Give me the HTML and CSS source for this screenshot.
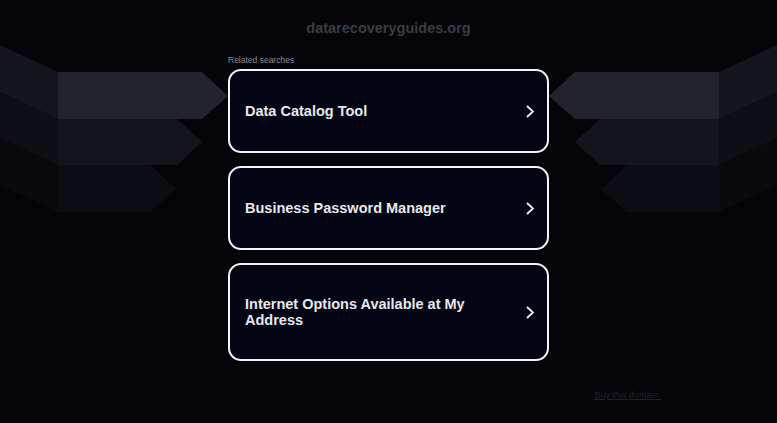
FILE: index.html
```html
<!DOCTYPE html>
<html lang="en">
<head>
  <meta charset="UTF-8">
  <title>datarecoveryguides.org</title>
  <link rel="stylesheet" href="styles.css">
</head>
<body>

  <!-- background arrows -->
  <svg class="decor" viewBox="0 0 777 423" width="777" height="423" aria-hidden="true">
    <g class="left">
      <polygon points="0,45 58,72 58,119 0,92" fill="#15161d"/>
      <polygon points="0,92 58,119 58,165 0,138" fill="#0e0f15"/>
      <polygon points="0,138 58,165 58,212 0,185" fill="#09090e"/>
      <polygon points="58,72 202,72 228,96 202,119 58,119" fill="#22232d"/>
      <polygon points="58,119 177,119 202,142 177,165 58,165" fill="#14151c"/>
      <polygon points="58,165 150,165 176,189 150,212 58,212" fill="#0c0d12"/>
    </g>
    <g class="right" transform="translate(777,0) scale(-1,1)">
      <polygon points="0,45 58,72 58,119 0,92" fill="#15161d"/>
      <polygon points="0,92 58,119 58,165 0,138" fill="#0e0f15"/>
      <polygon points="0,138 58,165 58,212 0,185" fill="#09090e"/>
      <polygon points="58,72 202,72 228,96 202,119 58,119" fill="#22232d"/>
      <polygon points="58,119 177,119 202,142 177,165 58,165" fill="#14151c"/>
      <polygon points="58,165 150,165 176,189 150,212 58,212" fill="#0c0d12"/>
    </g>
  </svg>

  <div id="page">
    <h1 class="domain">datarecoveryguides.org</h1>

    <div class="related">
      <div class="related-title">Related searches</div>

      <a class="search-card" href="#">
        <span class="search-text">Data Catalog Tool</span>
        <svg class="chevron" viewBox="0 0 8 13" width="8" height="13"><polyline points="1,1 7,6.5 1,12"/></svg>
      </a>

      <a class="search-card" href="#">
        <span class="search-text">Business Password Manager</span>
        <svg class="chevron" viewBox="0 0 8 13" width="8" height="13"><polyline points="1,1 7,6.5 1,12"/></svg>
      </a>

      <a class="search-card" href="#">
        <span class="search-text">Internet Options Available at My Address</span>
        <svg class="chevron" viewBox="0 0 8 13" width="8" height="13"><polyline points="1,1 7,6.5 1,12"/></svg>
      </a>
    </div>

    <div class="footer">
      <a href="#" class="buy-link">Buy this domain.</a>
    </div>
  </div>

</body>
</html>
```

FILE: styles.css
```css
html, body {
  margin: 0;
  height: 100%;
  background: #050509;
  font-family: "Liberation Sans", Arial, sans-serif;
  overflow: hidden;
}

.decor {
  position: absolute;
  top: 0;
  left: 0;
  z-index: 0;
}

#page {
  position: relative;
  z-index: 1;
  display: flex;
  flex-direction: column;
  align-items: center;
}

.domain {
  margin: 0;
  padding-top: 19px;
  font-size: 14.5px;
  line-height: 18px;
  font-weight: bold;
  color: #3b3c45;
}

.related {
  width: 321px;
  margin-top: 18px;
  display: flex;
  flex-direction: column;
  gap: 13px;
}

.related-title {
  font-size: 8.5px;
  line-height: 10px;
  color: #8a8a94;
  margin-bottom: -9px;
}

.search-card {
  box-sizing: border-box;
  min-height: 84px;
  display: flex;
  align-items: center;
  padding: 31px 13px 31px 15px;
  border: 2px solid #f4f4f6;
  border-radius: 13px;
  background: #030514;
  text-decoration: none;
}

.search-text {
  flex: 1;
  max-width: 255px;
  font-size: 14.5px;
  line-height: 16px;
  font-weight: bold;
  color: #e8e8ec;
}

.chevron {
  margin-left: auto;
  fill: none;
  stroke: #f4f4f6;
  stroke-width: 1.8;
}

.footer {
  width: 545px;
  margin-top: 26px;
  text-align: right;
  line-height: 12px;
}

.buy-link {
  font-size: 9px;
  color: #20223a;
}
```
